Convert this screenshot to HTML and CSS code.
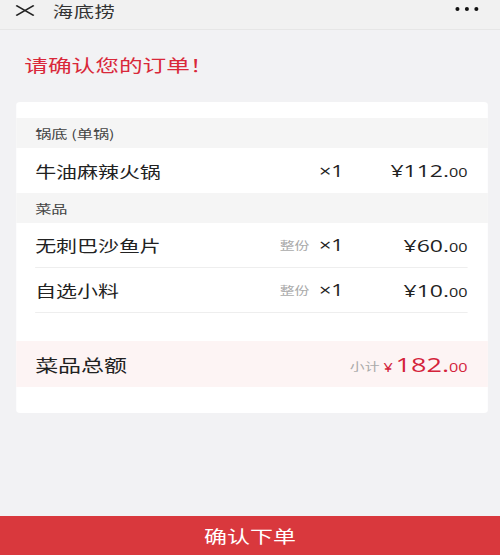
FILE: index.html
```html
<!DOCTYPE html>
<html lang="zh">
<head>
<meta charset="utf-8">
<link rel="stylesheet" href="styles.css">
</head>
<body>
<div class="page">
  <header class="topbar">
    <svg class="close" viewBox="0 0 15 11" width="15" height="11" preserveAspectRatio="none"><path d="M1 0.5 L14 10.5 M14 0.5 L1 10.5" stroke="#222" stroke-width="1.5" fill="none"/></svg>
    <span class="title">海底捞</span>
    <span class="more"><i></i><i></i><i></i></span>
  </header>
  <main class="content">
    <h1 class="heading">请确认您的订单！</h1>
    <section class="card">
      <div class="sec-head">锅底 (单锅)</div>
      <div class="row">
        <span class="name">牛油麻辣火锅</span>
        <span class="qty">×1</span>
        <span class="price">¥112.<small>00</small></span>
      </div>
      <div class="sec-head">菜品</div>
      <div class="row line">
        <span class="name">无刺巴沙鱼片</span>
        <span class="tag">整份</span>
        <span class="qty">×1</span>
        <span class="price">¥60.<small>00</small></span>
      </div>
      <div class="row line">
        <span class="name">自选小料</span>
        <span class="tag">整份</span>
        <span class="qty">×1</span>
        <span class="price">¥10.<small>00</small></span>
      </div>
      <div class="total">
        <span class="total-name">菜品总额</span>
        <span class="sub">小计</span>
        <span class="total-price"><span class="yen">¥</span>182.<small>00</small></span>
      </div>
    </section>
  </main>
  <button class="submit">确认下单</button>
</div>
</body>
</html>
```
FILE: styles.css
```css
* { box-sizing: border-box; margin: 0; padding: 0; }
html, body { width: 500px; height: 555px; overflow: hidden; }
body {
  font-family: "Noto Sans CJK SC", "Noto Sans", sans-serif;
  background: #f2f2f4;
  color: #222;
}
/* the screenshot is horizontally stretched: lay out at 370px and widen */
.page {
  width: 370px;
  height: 555px;
  display: flex;
  flex-direction: column;
  transform: scaleX(1.3514);
  transform-origin: 0 0;
}
.topbar {
  height: 30px;
  background: #f1f1f1;
  border-bottom: 1px solid #e6e6e6;
  display: flex;
  align-items: center;
  padding: 0 16px 0 11px;
}
.close { margin-right: 13px; margin-top: -9px; }
.title { font-size: 15px; color: #333; flex: 1; margin-top: -9px; letter-spacing: 0.5px; }
.more { display: flex; gap: 4px; margin-top: -11px; }
.more i { width: 3px; height: 4px; background: #111; border-radius: 50%; display: block; }
.content { flex: 1; padding: 0 9px 0 12px; }
.heading {
  font-size: 17.5px;
  font-weight: normal;
  color: #d9283a;
  margin: 22px 0 0 6px;
  line-height: 26px;
}
.card {
  margin-top: 24px;
  background: #fff;
  border-radius: 3px;
  padding: 16px 0 26px;
}
.sec-head {
  height: 30px;
  background: #f5f5f5;
  font-size: 12px;
  color: #444;
  display: flex;
  align-items: center;
  padding-left: 14px;
}
.row {
  height: 45px;
  display: flex;
  align-items: center;
  margin: 0 15px 0 14px;
}
.row.line { border-bottom: 1px solid #eeeeee; }
.name { flex: 1; font-size: 15.5px; color: #222; }
.tag { font-size: 11px; color: #aaa; margin-right: 7px; }
.qty {
  font-family: "Open Sans", "Noto Sans", sans-serif;
  font-size: 16px;
  font-weight: 500;
  color: #222;
  width: 18px;
}
.price {
  width: 92px;
  text-align: right;
  font-size: 17px;
  font-family: "Open Sans", "Noto Sans", sans-serif;
  font-weight: 500;
  color: #222;
}
.price small { font-size: 12px; font-weight: normal; }
.total {
  margin-top: 28px;
  height: 46px;
  background: #fdf4f4;
  display: flex;
  align-items: center;
  padding: 0 15px 0 14px;
}
.total-name { flex: 1; font-size: 17px; color: #222; }
.sub { font-size: 11px; color: #aaa; margin-right: 3px; margin-top: 3px; }
.total-price {
  font-family: "Open Sans", "Noto Sans", sans-serif;
  color: #d4233b;
  font-size: 20px;
  font-weight: 500;
}
.total-price .yen { font-size: 12px; margin-right: 2px; }
.total-price small { font-size: 12px; font-weight: normal; }
.submit {
  height: 39px;
  width: 100%;
  border: none;
  background: #d9383d;
  color: #fff;
  font-family: "Noto Sans CJK SC", sans-serif;
  font-size: 17px;
}
```
